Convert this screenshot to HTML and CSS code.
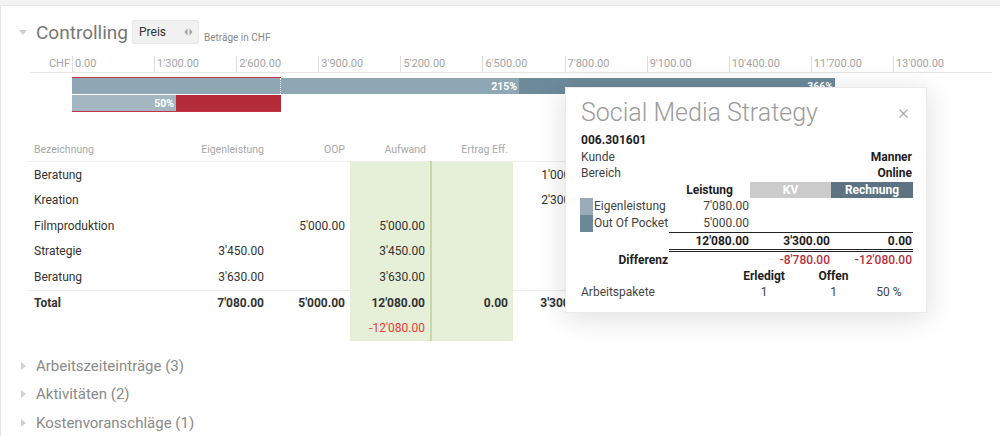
FILE: index.html
```html
<!DOCTYPE html>
<html lang="de">
<head>
    <meta charset="UTF-8">
    <title>Controlling</title>
    <link rel="stylesheet" href="styles.css">
</head>
<body>
    <div class="topbar"></div>
    <div class="page">
        <div class="section-head">
            <span class="caret-down"></span>
            <h2>Controlling</h2>
            <div class="select">
                <span>Preis</span>
                <svg width="9" height="8" viewBox="0 0 9 8"><path d="M3.5 0.5 L0.5 4 L3.5 7.5 Z M5.5 0.5 L8.5 4 L5.5 7.5 Z" fill="#a0a0a0"/></svg>
            </div>
            <span class="note">Beträge in CHF</span>
        </div>

        <div class="chart">
            <div class="axis">
                <div class="axis-unit">CHF</div>
                <div class="tick">0.00</div>
                <div class="tick">1'300.00</div>
                <div class="tick">2'600.00</div>
                <div class="tick">3'900.00</div>
                <div class="tick">5'200.00</div>
                <div class="tick">6'500.00</div>
                <div class="tick">7'800.00</div>
                <div class="tick">9'100.00</div>
                <div class="tick">10'400.00</div>
                <div class="tick">11'700.00</div>
                <div class="tick">13'000.00</div>
            </div>
            <div class="bars">
                <div class="bar bar-top">
                    <div class="seg seg-own" style="width: 447px">215%</div>
                    <div class="seg seg-oop" style="width: 316px">366%</div>
                </div>
                <div class="bar bar-bottom">
                    <div class="seg seg-done" style="width: 104px">50%</div>
                    <div class="seg seg-open" style="width: 105px"></div>
                </div>
                <div class="kv-frame" style="width: 209px"></div>
                <div class="kv-mark" style="left: 208px"></div>
            </div>
        </div>

        <table class="positions">
            <thead>
                <tr>
                    <th class="name">Bezeichnung</th>
                    <th>Eigenleistung</th>
                    <th>OOP</th>
                    <th>Aufwand</th>
                    <th>Ertrag Eff.</th>
                    <th></th>
                </tr>
            </thead>
            <tbody>
                <tr>
                    <td class="name">Beratung</td>
                    <td></td>
                    <td></td>
                    <td class="hl hl-split"></td>
                    <td class="hl"></td>
                    <td>1'000.00</td>
                </tr>
                <tr>
                    <td class="name">Kreation</td>
                    <td></td>
                    <td></td>
                    <td class="hl hl-split"></td>
                    <td class="hl"></td>
                    <td>2'300.00</td>
                </tr>
                <tr>
                    <td class="name">Filmproduktion</td>
                    <td></td>
                    <td>5'000.00</td>
                    <td class="hl hl-split">5'000.00</td>
                    <td class="hl"></td>
                    <td></td>
                </tr>
                <tr>
                    <td class="name">Strategie</td>
                    <td>3'450.00</td>
                    <td></td>
                    <td class="hl hl-split">3'450.00</td>
                    <td class="hl"></td>
                    <td></td>
                </tr>
                <tr>
                    <td class="name">Beratung</td>
                    <td>3'630.00</td>
                    <td></td>
                    <td class="hl hl-split">3'630.00</td>
                    <td class="hl"></td>
                    <td></td>
                </tr>
                <tr class="total">
                    <td class="name">Total</td>
                    <td>7'080.00</td>
                    <td>5'000.00</td>
                    <td class="hl hl-split">12'080.00</td>
                    <td class="hl">0.00</td>
                    <td>3'300.00</td>
                </tr>
                <tr class="diff">
                    <td class="name"></td>
                    <td></td>
                    <td></td>
                    <td class="hl hl-split neg">-12'080.00</td>
                    <td class="hl"></td>
                    <td></td>
                </tr>
            </tbody>
        </table>

        <ul class="collapsed">
            <li><span class="caret-right"></span>Arbeitszeiteinträge (3)</li>
            <li><span class="caret-right"></span>Aktivitäten (2)</li>
            <li><span class="caret-right"></span>Kostenvoranschläge (1)</li>
        </ul>

        <div class="popup">
            <div class="popup-head">
                <span class="popup-title">Social Media Strategy</span>
                <span class="close">&times;</span>
            </div>
            <div class="pop-grid">
                <div class="strong span-all">006.301601</div>
                <div>Kunde</div>
                <div class="strong right span-3">Manner</div>
                <div>Bereich</div>
                <div class="strong right span-3">Online</div>

                <div></div>
                <div class="strong center">Leistung</div>
                <div class="strong center head-kv">KV</div>
                <div class="strong center head-invoice">Rechnung</div>

                <div class="legend"><span class="swatch swatch-own"></span>Eigenleistung</div>
                <div class="right">7'080.00</div>
                <div></div>
                <div></div>

                <div class="legend"><span class="swatch swatch-oop"></span>Out Of Pocket</div>
                <div class="right">5'000.00</div>
                <div></div>
                <div></div>

                <div></div>
                <div class="strong right sum">12'080.00</div>
                <div class="strong right sum">3'300.00</div>
                <div class="strong right sum">0.00</div>

                <div class="strong right">Differenz</div>
                <div></div>
                <div class="right red">-8'780.00</div>
                <div class="right red">-12'080.00</div>
            </div>
            <div class="pop-grid work">
                <div></div>
                <div class="strong center">Erledigt</div>
                <div class="strong center">Offen</div>
                <div></div>

                <div>Arbeitspakete</div>
                <div class="center">1</div>
                <div class="center">1</div>
                <div class="center">50 %</div>
            </div>
        </div>
    </div>
</body>
</html>
```

FILE: styles.css
```css
body {
    margin: 0;
    font-family: Roboto, "Liberation Sans", sans-serif;
    background-color: #fff;
    color: #333;
    overflow: hidden;
}
.topbar {
    height: 5px;
    background-color: #f3f3f3;
    border-bottom: 1px solid #e8e8e8;
}
.page {
    position: relative;
    border-left: 1px solid #e4e4e4;
    height: 430px;
}

/* heading */
.section-head {
    display: flex;
    align-items: center;
    height: 24px;
    padding-top: 14px;
    padding-left: 18px;
}
.caret-down {
    width: 0;
    height: 0;
    border-left: 4px solid transparent;
    border-right: 4px solid transparent;
    border-top: 5px solid #d0d0d0;
    margin-right: 9px;
}
.section-head h2 {
    margin: 0 4px 0 0;
    font-size: 19px;
    font-weight: 400;
    color: #777;
}
.select {
    display: flex;
    align-items: center;
    justify-content: space-between;
    box-sizing: border-box;
    width: 67px;
    height: 24px;
    padding: 0 5px 0 6px;
    background-color: #f1f1f1;
    border: 1px solid #e8e8e8;
    border-radius: 2px;
    font-size: 12px;
    color: #333;
}
.note {
    align-self: flex-end;
    margin-left: 5px;
    padding-bottom: 1px;
    font-size: 10px;
    color: #888;
}

/* chart */
.chart {
    margin-top: 12px;
}
.axis {
    display: flex;
    width: 962px;
    height: 16px;
    margin-left: 29px;
    border-bottom: 1px solid #e6e6e6;
    font-size: 11px;
    color: #a4a4a4;
    line-height: 16px;
}
.axis-unit {
    width: 40px;
    padding-right: 2px;
    text-align: right;
}
.tick {
    width: 79.1px;
    padding-left: 2px;
    border-left: 1px solid #dedede;
    white-space: nowrap;
}
.bars {
    position: relative;
    margin: 4px 0 0 71px;
    padding-top: 1px;
}
.bar {
    display: flex;
}
.bar-top {
    height: 16px;
}
.bar-bottom {
    height: 16px;
    margin-top: 1px;
}
.seg {
    box-sizing: border-box;
    padding-right: 2px;
    text-align: right;
    font-size: 10.5px;
    font-weight: 700;
    color: #fff;
    line-height: 17px;
    overflow: hidden;
}
.seg-own {
    background-color: #8fa6b4;
}
.seg-oop {
    background-color: #6d8a9b;
}
.seg-done {
    background-color: #a3b6c1;
}
.seg-open {
    background-color: #b42c3a;
}
.kv-frame {
    position: absolute;
    top: 0;
    left: 0;
    box-sizing: border-box;
    height: 35px;
    border-top: 1px solid #c43445;
    border-bottom: 1px solid #c43445;
}
.kv-mark {
    position: absolute;
    top: 1px;
    height: 16px;
    border-left: 1px dotted rgba(255, 255, 255, 0.9);
}

/* positions table */
.positions {
    margin: 27px 0 0 27px;
    border-collapse: collapse;
    font-size: 12px;
}
.positions th {
    height: 23px;
    padding: 0 5px 0 0;
    text-align: right;
    font-size: 10.5px;
    font-weight: 400;
    color: #a8a8a8;
    border-bottom: 1px solid #ececec;
    white-space: nowrap;
}
.positions td {
    height: 25.5px;
    padding: 0 5px 0 0;
    text-align: right;
    white-space: nowrap;
}
.positions .name {
    width: 151px;
    padding-left: 6px;
    text-align: left;
}
.positions th:nth-child(2) { width: 74px; }
.positions th:nth-child(3) { width: 76px; }
.positions th:nth-child(4) { width: 76px; }
.positions th:nth-child(5) { width: 77px; }
.positions th:nth-child(6) { width: 74px; }
.positions .hl {
    background-color: #e6efd7;
}
.positions .hl-split {
    border-right: 2px solid #c7d8a6;
}
.positions .total td {
    height: 25px;
    font-weight: 700;
    border-top: 1px solid #ececec;
}
.positions .total td.hl {
    border-top: none;
}
.positions .diff td {
    height: 25px;
}
.positions .neg {
    color: #f03a3a;
}

/* collapsed sections */
.collapsed {
    list-style: none;
    margin: 11px 0 0;
    padding: 0 0 0 20px;
}
.collapsed li {
    display: flex;
    align-items: center;
    height: 28.5px;
    font-size: 15px;
    color: #8a8a8a;
}
.caret-right {
    width: 0;
    height: 0;
    border-top: 4px solid transparent;
    border-bottom: 4px solid transparent;
    border-left: 5px solid #d0d0d0;
    margin-right: 10px;
}

/* detail popup */
.popup {
    position: absolute;
    top: 81px;
    left: 564px;
    box-sizing: border-box;
    width: 362px;
    height: 226px;
    padding: 10px 14px 0 15px;
    background-color: #fff;
    border: 1px solid #ebebeb;
    box-shadow: 0 4px 28px rgba(0, 0, 0, 0.14);
    font-size: 12px;
    color: #444;
}
.popup-head {
    display: flex;
    justify-content: space-between;
    align-items: center;
    height: 28px;
    margin-bottom: 6px;
}
.popup-title {
    font-size: 25px;
    font-weight: 300;
    color: #9b9b9b;
}
.close {
    padding-right: 3px;
    font-size: 21px;
    font-weight: 300;
    color: #a5a5a5;
}
.pop-grid {
    display: grid;
    grid-template-columns: 88px 81px 81px 82px;
    line-height: 16.6px;
}
.pop-grid.work {
    grid-template-columns: 145px 76px 63px 48px;
    margin-top: -1px;
}
.pop-grid .strong {
    font-weight: 700;
    color: #1e1e1e;
}
.pop-grid .right {
    text-align: right;
    padding-right: 1px;
}
.pop-grid .center {
    text-align: center;
}
.span-all {
    grid-column: span 4;
}
.span-3 {
    grid-column: span 3;
}
.pop-grid .head-kv {
    background-color: #cbcbcb;
    color: #fff;
}
.pop-grid .head-invoice {
    background-color: #5d7383;
    color: #fff;
}
.legend {
    display: flex;
    white-space: nowrap;
}
.swatch {
    flex: none;
    width: 13px;
    margin: 0 1px 0 -1px;
}
.swatch-own {
    background-color: #9aacb9;
}
.swatch-oop {
    background-color: #6d8898;
}
.pop-grid .sum {
    border-top: 1px solid #222;
    border-bottom: 3px double #222;
}
.pop-grid .red {
    font-weight: 500;
    color: #b3303f;
}
```
